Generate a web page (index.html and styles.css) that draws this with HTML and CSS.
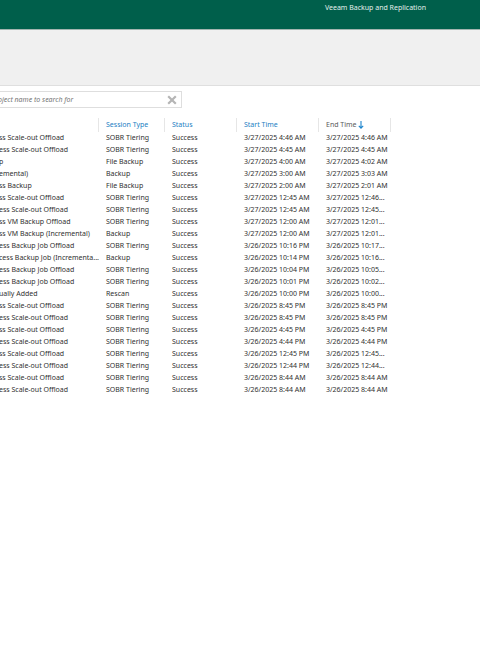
FILE: index.html
```
<!DOCTYPE html>
<html lang="en">
<head>
    <meta charset="UTF-8">
    <meta name="viewport" content="width=device-width, initial-scale=1.0">
    <title>Veeam Backup and Replication</title>
    <link rel="stylesheet" href="styles.css">
</head>
<body>
    <header class="titlebar">
        <span class="title">Veeam Backup and Replication</span>
    </header>
    <div class="ribbon"></div>
    <main>
        <form class="search">
            <input type="text" id="search" aria-label="Object name to search for" placeholder="oject name to search for">
            <button type="button" id="clear" aria-label="Clear search">
                <svg viewBox="0 0 10 10" width="10" height="10"><path d="M1.2 1.2L8.8 8.8M8.8 1.2L1.2 8.8" stroke="#b5b5b5" stroke-width="2.2" fill="none"/></svg>
            </button>
        </form>
        <table class="sessions">
            <colgroup>
                <col class="col-name">
                <col class="col-type">
                <col class="col-status">
                <col class="col-start">
                <col class="col-end">
                <col>
            </colgroup>
            <thead>
                <tr>
                    <th></th>
                    <th>Session Type</th>
                    <th>Status</th>
                    <th>Start Time</th>
                    <th class="sorted">End Time <svg viewBox="0 0 6 8" width="6" height="8"><path d="M3 0V7M0.8 4.8L3 7.1L5.2 4.8" stroke="#1c84cc" stroke-width="1.1" fill="none"/></svg></th>
                    <th></th>
                </tr>
            </thead>
            <tbody id="rows"></tbody>
        </table>
    </main>

    <script>
        const sessions = [
            ["ss Scale-out Offload", "SOBR Tiering", "3/27/2025 4:46 AM", "3/27/2025 4:46 AM"],
            ["ess Scale-out Offload", "SOBR Tiering", "3/27/2025 4:45 AM", "3/27/2025 4:45 AM"],
            ["p", "File Backup", "3/27/2025 4:00 AM", "3/27/2025 4:02 AM"],
            ["emental)", "Backup", "3/27/2025 3:00 AM", "3/27/2025 3:03 AM"],
            ["ss Backup", "File Backup", "3/27/2025 2:00 AM", "3/27/2025 2:01 AM"],
            ["ss Scale-out Offload", "SOBR Tiering", "3/27/2025 12:45 AM", "3/27/2025 12:46..."],
            ["ess Scale-out Offload", "SOBR Tiering", "3/27/2025 12:45 AM", "3/27/2025 12:45..."],
            ["ss VM Backup Offload", "SOBR Tiering", "3/27/2025 12:00 AM", "3/27/2025 12:01..."],
            ["ss VM Backup (Incremental)", "Backup", "3/27/2025 12:00 AM", "3/27/2025 12:01..."],
            ["ess Backup Job Offload", "SOBR Tiering", "3/26/2025 10:16 PM", "3/26/2025 10:17..."],
            ["cess Backup Job (Incrementa...", "Backup", "3/26/2025 10:14 PM", "3/26/2025 10:16..."],
            ["ess Backup Job Offload", "SOBR Tiering", "3/26/2025 10:04 PM", "3/26/2025 10:05..."],
            ["ess Backup Job Offload", "SOBR Tiering", "3/26/2025 10:01 PM", "3/26/2025 10:02..."],
            ["ually Added", "Rescan", "3/26/2025 10:00 PM", "3/26/2025 10:00..."],
            ["ss Scale-out Offload", "SOBR Tiering", "3/26/2025 8:45 PM", "3/26/2025 8:45 PM"],
            ["ess Scale-out Offload", "SOBR Tiering", "3/26/2025 8:45 PM", "3/26/2025 8:45 PM"],
            ["ss Scale-out Offload", "SOBR Tiering", "3/26/2025 4:45 PM", "3/26/2025 4:45 PM"],
            ["ess Scale-out Offload", "SOBR Tiering", "3/26/2025 4:44 PM", "3/26/2025 4:44 PM"],
            ["ss Scale-out Offload", "SOBR Tiering", "3/26/2025 12:45 PM", "3/26/2025 12:45..."],
            ["ess Scale-out Offload", "SOBR Tiering", "3/26/2025 12:44 PM", "3/26/2025 12:44..."],
            ["ss Scale-out Offload", "SOBR Tiering", "3/26/2025 8:44 AM", "3/26/2025 8:44 AM"],
            ["ess Scale-out Offload", "SOBR Tiering", "3/26/2025 8:44 AM", "3/26/2025 8:44 AM"]
        ];

        const rows = document.getElementById("rows");

        sessions.forEach(([name, type, start, end]) => {
            const row = rows.insertRow();
            [name, type, "Success", start, end].forEach(text => {
                row.insertCell().textContent = text;
            });
        });

        document.getElementById("clear").addEventListener("click", () => {
            document.getElementById("search").value = "";
        });
    </script>
</body>
</html>
```

FILE: styles.css
```
body {
    margin: 0;
    background: #fff;
    color: #303030;
    font-family: "Noto Sans", "Open Sans", sans-serif;
    font-size: 7px;
    line-height: 12px;
}

.titlebar {
    box-sizing: border-box;
    height: 30px;
    padding: 2px 54px 0 0;
    background: #005f4b;
    border-bottom: 1px solid #a3b5b0;
    color: #e3f0ec;
    text-align: right;
}

.ribbon {
    height: 55px;
    background: #f0f0f0;
    border-bottom: 1px solid #dfdfdf;
}

.search {
    display: flex;
    align-items: center;
    box-sizing: border-box;
    width: 185px;
    height: 17px;
    margin: 5px 0 10px -3px;
    border: 1px solid #dedede;
}

.search input {
    flex: 1;
    min-width: 0;
    padding: 0;
    border: none;
    outline: none;
    background: none;
    color: #3c3c3c;
    font: inherit;
    font-style: italic;
}

.search input::placeholder {
    color: #757575;
    opacity: 1;
}

.search button {
    display: flex;
    padding: 0 4px;
    border: none;
    background: none;
    cursor: pointer;
}

.sessions {
    width: 100%;
    table-layout: fixed;
    border-collapse: separate;
    border-spacing: 0;
}

.col-name {
    width: 98px;
}

.col-type {
    width: 66px;
}

.col-status {
    width: 72px;
}

.col-start {
    width: 82px;
}

.col-end {
    width: 72px;
}

.sessions th,
.sessions td {
    height: 12px;
    padding: 0 0 0 8px;
    text-align: left;
    font-weight: normal;
    white-space: nowrap;
}

.sessions th {
    height: 14px;
    padding-left: 7px;
    border-left: 1px solid #e6e6e6;
    color: #2380c3;
}

.sessions th:first-child {
    border-left: none;
}

.sessions .sorted {
    color: #5a5a5a;
}

.sorted svg {
    vertical-align: middle;
}

.sessions td:first-child {
    padding-left: 0;
    text-indent: -1px;
}
```
